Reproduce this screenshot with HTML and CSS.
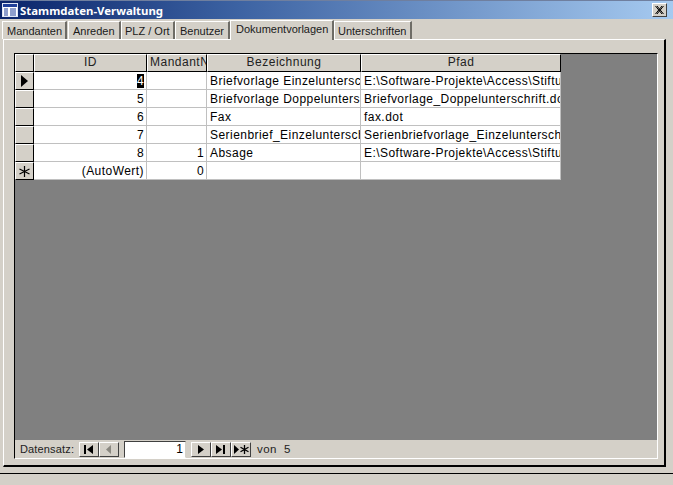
FILE: index.html
```html
<!DOCTYPE html>
<html lang="de">
<head>
<meta charset="utf-8">
<title>Stammdaten-Verwaltung</title>
<link rel="stylesheet" href="styles.css">
</head>
<body>
<div class="window">
  <header class="titlebar">
    <svg class="appicon" width="16" height="14" viewBox="0 0 16 14"><rect x="0.5" y="0.5" width="15" height="13" fill="#fff" stroke="#dfe6f5"/><rect x="1" y="1" width="14" height="3" fill="#1f3f9a"/><path d="M2 6h4M2 8h4M2 10h4M2 12h4M8 6h6M8 8h6M8 10h6M8 12h6" stroke="#1f3f9a"/></svg>
    <span class="title">Stammdaten-Verwaltung</span>
    <button class="close"><svg width="9" height="8" viewBox="0 0 9 8"><path d="M0.5 0L7 8M2 0L8.5 8M7 0L0.5 8M8.5 0L2 8" stroke="#000" stroke-width="1"/></svg></button>
  </header>
  <nav class="tabs">
    <span class="tab t1">Mandanten</span>
    <span class="tab t2">Anreden</span>
    <span class="tab t3">PLZ / Ort</span>
    <span class="tab t4">Benutzer</span>
    <span class="tab active">Dokumentvorlagen</span>
    <span class="tab t6">Unterschriften</span>
  </nav>
  <section class="page">
    <div class="frame">
      <div class="sheet">
        <div class="grid">
          <div class="corner"></div><div class="head">ID</div><div class="head m">MandantN</div><div class="head">Bezeichnung</div><div class="head">Pfad</div>

          <div class="sel"><svg width="7" height="12" viewBox="0 0 7 12"><path d="M0 0L7 6L0 12Z" fill="#000"/></svg></div><div class="cell num"><span class="mark">4</span></div><div class="cell num"></div><div class="cell">Briefvorlage Einzelunterschrift</div><div class="cell">E:\Software-Projekte\Access\Stiftung</div>

          <div class="sel"></div><div class="cell num">5</div><div class="cell num"></div><div class="cell">Briefvorlage Doppelunterschrift</div><div class="cell">Briefvorlage_Doppelunterschrift.dot</div>

          <div class="sel"></div><div class="cell num">6</div><div class="cell num"></div><div class="cell">Fax</div><div class="cell">fax.dot</div>

          <div class="sel"></div><div class="cell num">7</div><div class="cell num"></div><div class="cell">Serienbrief_Einzelunterschrift</div><div class="cell">Serienbriefvorlage_Einzelunterschrift</div>

          <div class="sel"></div><div class="cell num">8</div><div class="cell num">1</div><div class="cell">Absage</div><div class="cell">E:\Software-Projekte\Access\Stiftung</div>

          <div class="sel last"><svg width="11" height="11" viewBox="0 0 11 11"><path d="M5.500 0V11M0.500 3L10.500 8M10.500 3L0.500 8" stroke="#000" stroke-width="1.200"/></svg></div><div class="cell num">(AutoWert)</div><div class="cell num">0</div><div class="cell"></div><div class="cell"></div>
        </div>
      </div>
      <footer class="nav">
        <span class="nav-label">Datensatz:</span>
        <span class="navbtns">
          <button class="nb"><svg width="10" height="9" viewBox="0 0 10 9"><path d="M0 0h2v9H0zM9 0v9L3 4.500z"/></svg></button>
          <button class="nb off"><svg width="6" height="9" viewBox="0 0 6 9"><path d="M5 0v9L0 4.500z" fill="#8a8880"/></svg></button>
        </span>
        <input class="recno" value="1" readonly>
        <span class="navbtns">
          <button class="nb"><svg width="6" height="9" viewBox="0 0 6 9"><path d="M0 0v9l6-4.500z"/></svg></button>
          <button class="nb"><svg width="10" height="9" viewBox="0 0 10 9"><path d="M0 0v9l6-4.500zM7 0h2v9H7z"/></svg></button>
          <button class="nb"><svg width="15" height="9" viewBox="0 0 15 9"><path d="M0 0v9l5-4.500z"/><path d="M10.500 0V9M6.500 2.200L14.500 6.800M14.500 2.200L6.500 6.800" stroke="#000" stroke-width="1.300"/></svg></button>
        </span>
        <span class="nav-total">von&nbsp; 5</span>
      </footer>
    </div>
  </section>
  <div class="status"></div>
</div>
</body>
</html>
```
FILE: styles.css
```css
* { box-sizing: border-box; }
html, body { margin: 0; padding: 0; }
body { width: 673px; height: 485px; overflow: hidden; background: #d4d0c8; font-family: "Liberation Sans", Arial, sans-serif; font-size: 12px; color: #000; }
.window { width: 673px; height: 485px; display: flex; flex-direction: column; background: #d4d0c8; }

.titlebar { height: 19px; flex: none; display: flex; align-items: center; padding: 0 6px 0 2px; background: linear-gradient(90deg, #0a246a 0%, #3c62a2 35%, #a6caf0 100%); border-top: 1px solid #6f7f9f; }
.appicon { flex: none; }
.title { margin-left: 2px; font-family: "Noto Sans", sans-serif; font-weight: bold; font-size: 11.400px; color: #fff; white-space: nowrap; }
.close { margin-left: auto; width: 15px; height: 14px; padding: 0; display: flex; align-items: center; justify-content: center; background: #d4d0c8; border: 1px solid; border-color: #fff #404040 #404040 #fff; }

.tabs { flex: none; height: 20px; display: flex; align-items: flex-end; padding-left: 2px; }
.tab { height: 18px; padding: 0 0 0 4px; line-height: 19px; white-space: nowrap; font-size: 11px; background: #d4d0c8; border-top: 1px solid #fff; border-left: 1px solid #fff; border-right: 2px solid #6e6c66; color: #1a1a1a; }
.tab.t1 { width: 65px; }
.tab.t2 { width: 53px; margin-left: 1px; }
.tab.t3 { width: 54px; padding-left: 3px; }
.tab.t4 { width: 55px; }
.tab.active { width: 104px; height: 20px; line-height: 17px; margin: 0 0 -1px 0; padding-left: 5px; position: relative; z-index: 1; }
.tab.t6 { width: 78px; padding-left: 3px; }

.page { flex: 1; margin: 0 7px 0 3px; padding: 13px 6px 6px 10px; border-top: 1px solid #fff; border-left: 1px solid #fff; border-right: 2px solid #000; border-bottom: 2px solid #000; min-height: 0; display: flex; }
.frame { flex: 1; display: flex; flex-direction: column; border-top: 1px solid #000; border-left: 1px solid #000; border-right: 1px solid #fff; border-bottom: 1px solid #fff; min-height: 0; }

.sheet { flex: 1; background: #808080; min-height: 0; }
.grid { display: grid; width: 546px; grid-template-columns: 19px 113px 60px 154px 200px; grid-template-rows: repeat(7, 18px); background: #fff; }
.corner, .head, .sel { background: #d4d0c8; border-top: 1px solid #fff; border-left: 1px solid #fff; border-right: 1px solid #000; border-bottom: 1px solid #000; }
.head { text-align: center; line-height: 15px; overflow: hidden; white-space: nowrap; color: #222; font-size: 12px; letter-spacing: 0.500px; }
.head.m { padding-left: 2px; text-align: left; }
.sel { display: flex; align-items: center; justify-content: center; }
.cell { border-right: 1px solid #c0c0c0; border-bottom: 1px solid #c0c0c0; padding: 0 2px 0 3px; line-height: 18px; white-space: nowrap; overflow: hidden; font-size: 12px; letter-spacing: 0.450px; }
.cell.num { text-align: right; padding-right: 2px; }
.mark { background: #000; color: #fff; }

.nav { flex: none; height: 18px; display: flex; align-items: center; padding: 0 0 0 5px; background: #d4d0c8; }
.nav-label { width: 59px; letter-spacing: 0.150px; font-size: 11px; color: #222; }
.navbtns { display: flex; }
.nb { width: 20px; height: 15px; padding: 0; display: flex; align-items: center; justify-content: center; background: #d4d0c8; border: 1px solid; border-color: #fff #404040 #404040 #fff; }
.recno { width: 62px; height: 17px; margin: 0 5px; padding: 0 2px; text-align: right; font: 12px "Liberation Sans", Arial, sans-serif; background: #fff; border: 1px solid; border-color: #404040 #d4d0c8 #fff #404040; outline: none; }
.nav-total { margin-left: 6px; letter-spacing: 0.400px; font-size: 11.500px; color: #222; }

.status { flex: none; height: 12px; margin-top: 6px; border-top: 1px solid #000; }
```
